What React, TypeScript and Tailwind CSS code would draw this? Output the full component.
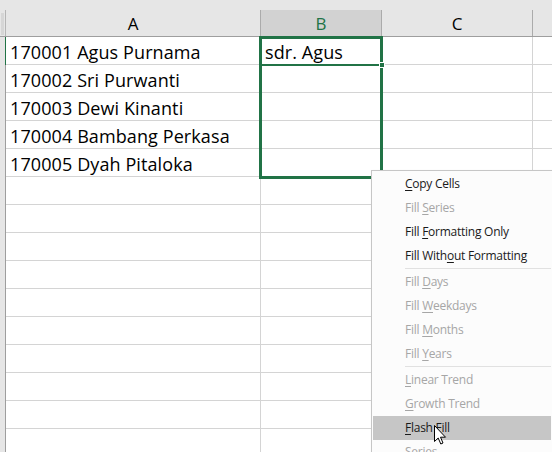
import React from 'react';

const data = [
  ['170001 Agus Purnama', 'sdr. Agus'],
  ['170002 Sri Purwanti', ''],
  ['170003 Dewi Kinanti', ''],
  ['170004 Bambang Perkasa', ''],
  ['170005 Dyah Pitaloka', ''],
];
const rows = [...data, ...Array.from({ length: 10 }, () => ['', ''])];

type Item = { pre: string; key: string; post: string; enabled?: boolean; active?: boolean } | 'sep';

const menu: Item[] = [
  { pre: '', key: 'C', post: 'opy Cells', enabled: true },
  { pre: 'Fill ', key: 'S', post: 'eries' },
  { pre: 'Fill ', key: 'F', post: 'ormatting Only', enabled: true },
  { pre: 'Fill With', key: 'o', post: 'ut Formatting', enabled: true },
  'sep',
  { pre: 'Fill ', key: 'D', post: 'ays' },
  { pre: 'Fill ', key: 'W', post: 'eekdays' },
  { pre: 'Fill ', key: 'M', post: 'onths' },
  { pre: 'Fill ', key: 'Y', post: 'ears' },
  'sep',
  { pre: '', key: 'L', post: 'inear Trend' },
  { pre: '', key: 'G', post: 'rowth Trend' },
  { pre: '', key: 'F', post: 'lash Fill', enabled: true, active: true },
  { pre: 'S', key: 'e', post: 'ries' },
];

const cols = 'grid grid-cols-[6px_255px_121px_151px_1fr]';

export default function App() {
  return (
    <div className="relative h-[452px] w-[552px] overflow-hidden bg-white font-['Open_Sans',sans-serif] text-black">
      {/* header */}
      <div className="h-[10px] bg-[#e6e6e6]" />
      <div className={`${cols} h-[27px] border-b border-[#9e9e9e] bg-[#e6e6e6] text-[17px]`}>
        <div className="border-r border-[#b5b5b5]">
          <div className="ml-[1px] mt-[3px] h-[22px] w-[3px] bg-[#d6d6d6]" />
        </div>
        <div className="flex items-center justify-center border-r border-[#ababab] leading-none">A</div>
        <div className="flex items-center justify-center border-r border-[#ababab] bg-[#d2d2d2] leading-none text-[#217346]">B</div>
        <div className="flex items-center justify-center border-r border-[#ababab] leading-none">C</div>
        <div />
      </div>
      {/* body */}
      {rows.map((r, i) => (
        <div key={i} className={`${cols} h-[28px] text-[18px]`}>
          <div className={`bg-[#e6e6e6] border-r ${i === 0 ? 'border-[#217346]' : 'border-[#9e9e9e]'}`} />
          <div className="flex items-end border-b border-r border-[#d4d4d4] pl-[4px] leading-[24px] tracking-[0.1px]">{r[0]}</div>
          <div className="flex items-end border-b border-r border-[#d4d4d4] pl-[4px] leading-[24px] tracking-[0.1px]">{r[1]}</div>
          <div className="border-b border-r border-[#d4d4d4]" />
          <div className="border-b border-[#d4d4d4]" />
        </div>
      ))}

      {/* selection */}
      <div className="absolute left-[259px] top-[36px] h-[143px] w-[124px] border-[3px] border-[#217346]" />
      <div className="absolute left-[259px] top-[64px] h-[2px] w-[122px] bg-[#217346]" />
      <div className="absolute left-[379px] top-[62px] h-[6px] w-[6px] border border-white bg-[#217346]" />

      {/* context menu */}
      <div className="absolute left-[371px] top-[170px] w-[182px] border border-[#c6c6c6] bg-[#fcfcfc] p-[1px] text-[12px] tracking-[-0.25px] shadow-[1px_1px_2px_rgba(0,0,0,0.15)]">
        {menu.map((m, i) =>
          m === 'sep' ? (
            <div key={i} className="h-[2px] pl-[32px]">
              <div className="h-px bg-[#e1e1e1]" />
            </div>
          ) : (
            <div
              key={i}
              className={`flex h-[24px] items-center pl-[32px] ${m.active ? 'bg-[#c6c6c6]' : ''} ${m.enabled ? 'text-[#1a1a1a]' : 'text-[#a6a6a6]'}`}
            >
              <span>
                {m.pre}
                <span className="underline underline-offset-2">{m.key}</span>
                {m.post}
              </span>
            </div>
          ),
        )}
      </div>

      {/* mouse pointer */}
      <svg className="absolute left-[434px] top-[425px]" width="13" height="21" viewBox="0 0 13 21">
        <path d="M0.5 0.5 L0.5 16.5 L4.2 13 L6.8 19 L9 18 L6.5 12.2 L11.5 12.2 Z" fill="#fff" stroke="#000" strokeWidth="1" strokeLinejoin="miter" />
      </svg>
    </div>
  );
}
